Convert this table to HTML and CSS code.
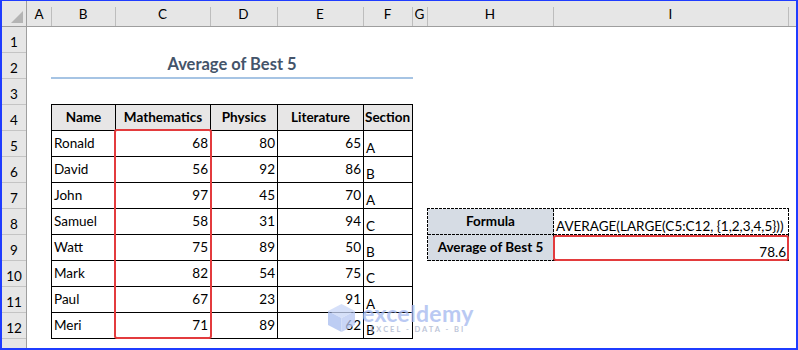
FILE: index.html
```html
<!DOCTYPE html>
<html lang="en">
<head>
<meta charset="utf-8">
<title>Average of Best 5</title>
<link rel="stylesheet" href="styles.css">
</head>
<body>
<div class="sheet">
  <div class="colhdr">
    <div class="corner"><svg width="25" height="25" viewBox="0 0 25 25"><polygon points="9,22 21,22 21,10" fill="#b4b4b4"/></svg></div>
    <div class="ch first">A</div>
    <div class="ch">B</div>
    <div class="ch">C</div>
    <div class="ch">D</div>
    <div class="ch">E</div>
    <div class="ch">F</div>
    <div class="ch">G</div>
    <div class="ch">H</div>
    <div class="ch">I</div>
    <div class="ch"></div>
  </div>
  <div class="body">
    <div class="rowhdr">
      <div class="rh first">1</div>
      <div class="rh">2</div>
      <div class="rh">3</div>
      <div class="rh">4</div>
      <div class="rh">5</div>
      <div class="rh">6</div>
      <div class="rh">7</div>
      <div class="rh">8</div>
      <div class="rh">9</div>
      <div class="rh">10</div>
      <div class="rh">11</div>
      <div class="rh">12</div>
      <div class="rh last"></div>
    </div>
    <div class="cells">
      <div class="title">Average of Best 5</div>

      <div class="data">
        <div class="c h">Name</div><div class="c h">Mathematics</div><div class="c h">Physics</div><div class="c h">Literature</div><div class="c h sec">Section</div>
        <div class="c">Ronald</div><div class="c n">68</div><div class="c n">80</div><div class="c n">65</div><div class="c s">A</div>
        <div class="c">David</div><div class="c n">56</div><div class="c n">92</div><div class="c n">86</div><div class="c s">B</div>
        <div class="c">John</div><div class="c n">97</div><div class="c n">45</div><div class="c n">70</div><div class="c s">A</div>
        <div class="c">Samuel</div><div class="c n">58</div><div class="c n">31</div><div class="c n">94</div><div class="c s">C</div>
        <div class="c">Watt</div><div class="c n">75</div><div class="c n">89</div><div class="c n">50</div><div class="c s">B</div>
        <div class="c">Mark</div><div class="c n">82</div><div class="c n">54</div><div class="c n">75</div><div class="c s">C</div>
        <div class="c">Paul</div><div class="c n">67</div><div class="c n">23</div><div class="c n">91</div><div class="c s">A</div>
        <div class="c">Meri</div><div class="c n">71</div><div class="c n">89</div><div class="c n">62</div><div class="c s">B</div>
        <div class="hl"></div>
      </div>

      <div class="formula">
        <div class="f fl">Formula</div>
        <div class="f fv">AVERAGE(LARGE(C5:C12, {1,2,3,4,5}))</div>
        <div class="f fl">Average of Best 5</div>
        <div class="f fv fr">78.6</div>
        <div class="hl2"></div>
      </div>

      <div class="wm">
        <svg class="cube" width="27" height="28" viewBox="0 0 27 28">
          <polygon points="13.5,0 27,7 13.5,14 0,7" fill="#c9d6f7"/>
          <polygon points="0,7 13.5,14 13.5,28 0,21" fill="#a8bdf0"/>
          <polygon points="27,7 13.5,14 13.5,28 27,21" fill="#b7c8f3"/>
        </svg>
        <div class="wm-text">
          <div class="wm-name">exceldemy</div>
          <div class="wm-tag">EXCEL - DATA - BI</div>
        </div>
      </div>
    </div>
  </div>
</div>
</body>
</html>
```

FILE: styles.css
```css
html, body {
  margin: 0;
  padding: 0;
  background: #fff;
}

.sheet {
  width: 798px;
  height: 350px;
  box-sizing: border-box;
  border: 2px solid #1f3cff;
  border-top-width: 1px;
  display: flex;
  flex-direction: column;
  background: #fff;
  font-family: Lato, "Liberation Sans", sans-serif;
  font-size: 13.5px;
  line-height: 1.2;
  color: #000;
  overflow: hidden;
}

/* column header */
.colhdr {
  display: grid;
  grid-template-columns: 25px 24px 64px 95px 67px 86px 49px 15px 126px 235px 8px;
  height: 26px;
  box-sizing: border-box;
  border-bottom: 1px solid #9e9e9e;
  background: #e6e6e6;
  flex: none;
}

.corner {
  box-sizing: border-box;
  border-right: 1px solid #9e9e9e;
  height: 25px;
}

.corner svg {
  display: block;
}

.ch {
  display: flex;
  align-items: center;
  justify-content: center;
  padding-top: 2px;
  box-sizing: border-box;
  background: linear-gradient(#bdbdbd, #bdbdbd) left bottom / 1px 19px no-repeat;
}

.ch.first {
  background: none;
}

/* body */
.body {
  display: flex;
  flex: 1;
  min-height: 0;
}

.rowhdr {
  width: 25px;
  flex: none;
  box-sizing: border-box;
  border-right: 1px solid #9e9e9e;
  background: #e6e6e6;
  display: flex;
  flex-direction: column;
}

.rh {
  height: 26px;
  flex: none;
  box-sizing: border-box;
  border-top: 1px solid #c4c4c4;
  display: flex;
  align-items: flex-end;
  justify-content: center;
  padding-bottom: 2px;
}

.rh.first {
  height: 25px;
  border-top: none;
}

.rh.last {
  flex: 1;
  height: auto;
}

.cells {
  flex: 1;
  position: relative;
  display: grid;
  grid-template-columns: 24px 64px 95px 67px 86px 49px 15px 126px 235px 8px;
  grid-template-rows: 25px repeat(11, 26px) 10px;
}

.title {
  grid-column: 2 / 7;
  grid-row: 2;
  align-self: start;
  width: 362px;
  height: 27px;
  box-sizing: border-box;
  padding-top: 3px;
  border-bottom: 2px solid #a6c4e4;
  text-align: center;
  font-weight: 700;
  font-size: 16.5px;
  color: #44546a;
}

/* data table */
.data {
  grid-column: 2 / 7;
  grid-row: 4 / 13;
  align-self: start;
  justify-self: start;
  position: relative;
  width: 362px;
  height: 235px;
  box-sizing: border-box;
  padding: 1px;
  background: #000;
  display: grid;
  grid-template-columns: 63px 94px 66px 85px 48px;
  grid-template-rows: repeat(9, 25px);
  gap: 1px;
}

.c {
  background: #fff;
  display: flex;
  align-items: center;
  padding: 0 2px;
  white-space: nowrap;
  min-width: 0;
}

.c.h {
  background: #e7e6e6;
  font-weight: 700;
  justify-content: center;
}

.c.h.sec {
  justify-content: flex-start;
  padding: 0 0 0 1px;
  overflow: hidden;
}

.c.n {
  justify-content: flex-end;
}

.c.s {
  align-items: flex-end;
}

/* red highlight overlays */
.hl {
  position: absolute;
  left: 63px;
  top: 25px;
  width: 98px;
  height: 210px;
  box-sizing: border-box;
  border: 2px solid #e33b3d;
  border-radius: 3px;
}

.hl2 {
  position: absolute;
  left: 126px;
  top: 27px;
  width: 236px;
  height: 26px;
  box-sizing: border-box;
  border: 2px solid #e33b3d;
  border-radius: 3px;
}

/* formula box */
.formula {
  grid-column: 8 / 10;
  grid-row: 8 / 10;
  align-self: start;
  justify-self: start;
  position: relative;
  width: 362px;
  height: 53px;
  box-sizing: border-box;
  padding: 1px 0 0 1px;
  display: grid;
  grid-template-columns: 126px 235px;
  grid-template-rows: 26px 26px;
  background:
    repeating-linear-gradient(90deg, #000 0 3px, transparent 3px 4px) left top / 100% 1px no-repeat,
    repeating-linear-gradient(180deg, #000 0 3px, transparent 3px 4px) left top / 1px 100% no-repeat;
}

.f {
  display: flex;
  box-sizing: border-box;
  padding: 0 1px 1px 0;
  white-space: nowrap;
  background:
    repeating-linear-gradient(90deg, #000 0 3px, transparent 3px 4px) left bottom / 100% 1px no-repeat,
    repeating-linear-gradient(180deg, #000 0 3px, transparent 3px 4px) right top / 1px 100% no-repeat;
}

.f.fl {
  background-color: #d6dce4;
  font-weight: 700;
  align-items: center;
  justify-content: center;
}

.f.fv {
  align-items: flex-end;
  padding-left: 2px;
}

.f.fr {
  justify-content: flex-end;
  padding-right: 3px;
}

/* watermark overlay */
.wm {
  position: absolute;
  left: 301px;
  top: 275px;
  display: flex;
  align-items: flex-start;
  gap: 7px;
  opacity: 0.75;
  pointer-events: none;
}

.cube {
  display: block;
  margin-top: 2px;
}

.wm-text {
  display: flex;
  flex-direction: column;
}

.wm-name {
  font-weight: 700;
  font-size: 23px;
  line-height: 23px;
  letter-spacing: 0.3px;
  color: #a3b8ef;
}

.wm-tag {
  font-size: 7.5px;
  line-height: 9px;
  letter-spacing: 2px;
  color: #a8b2cc;
  padding-left: 8px;
  font-weight: 700;
}
```
